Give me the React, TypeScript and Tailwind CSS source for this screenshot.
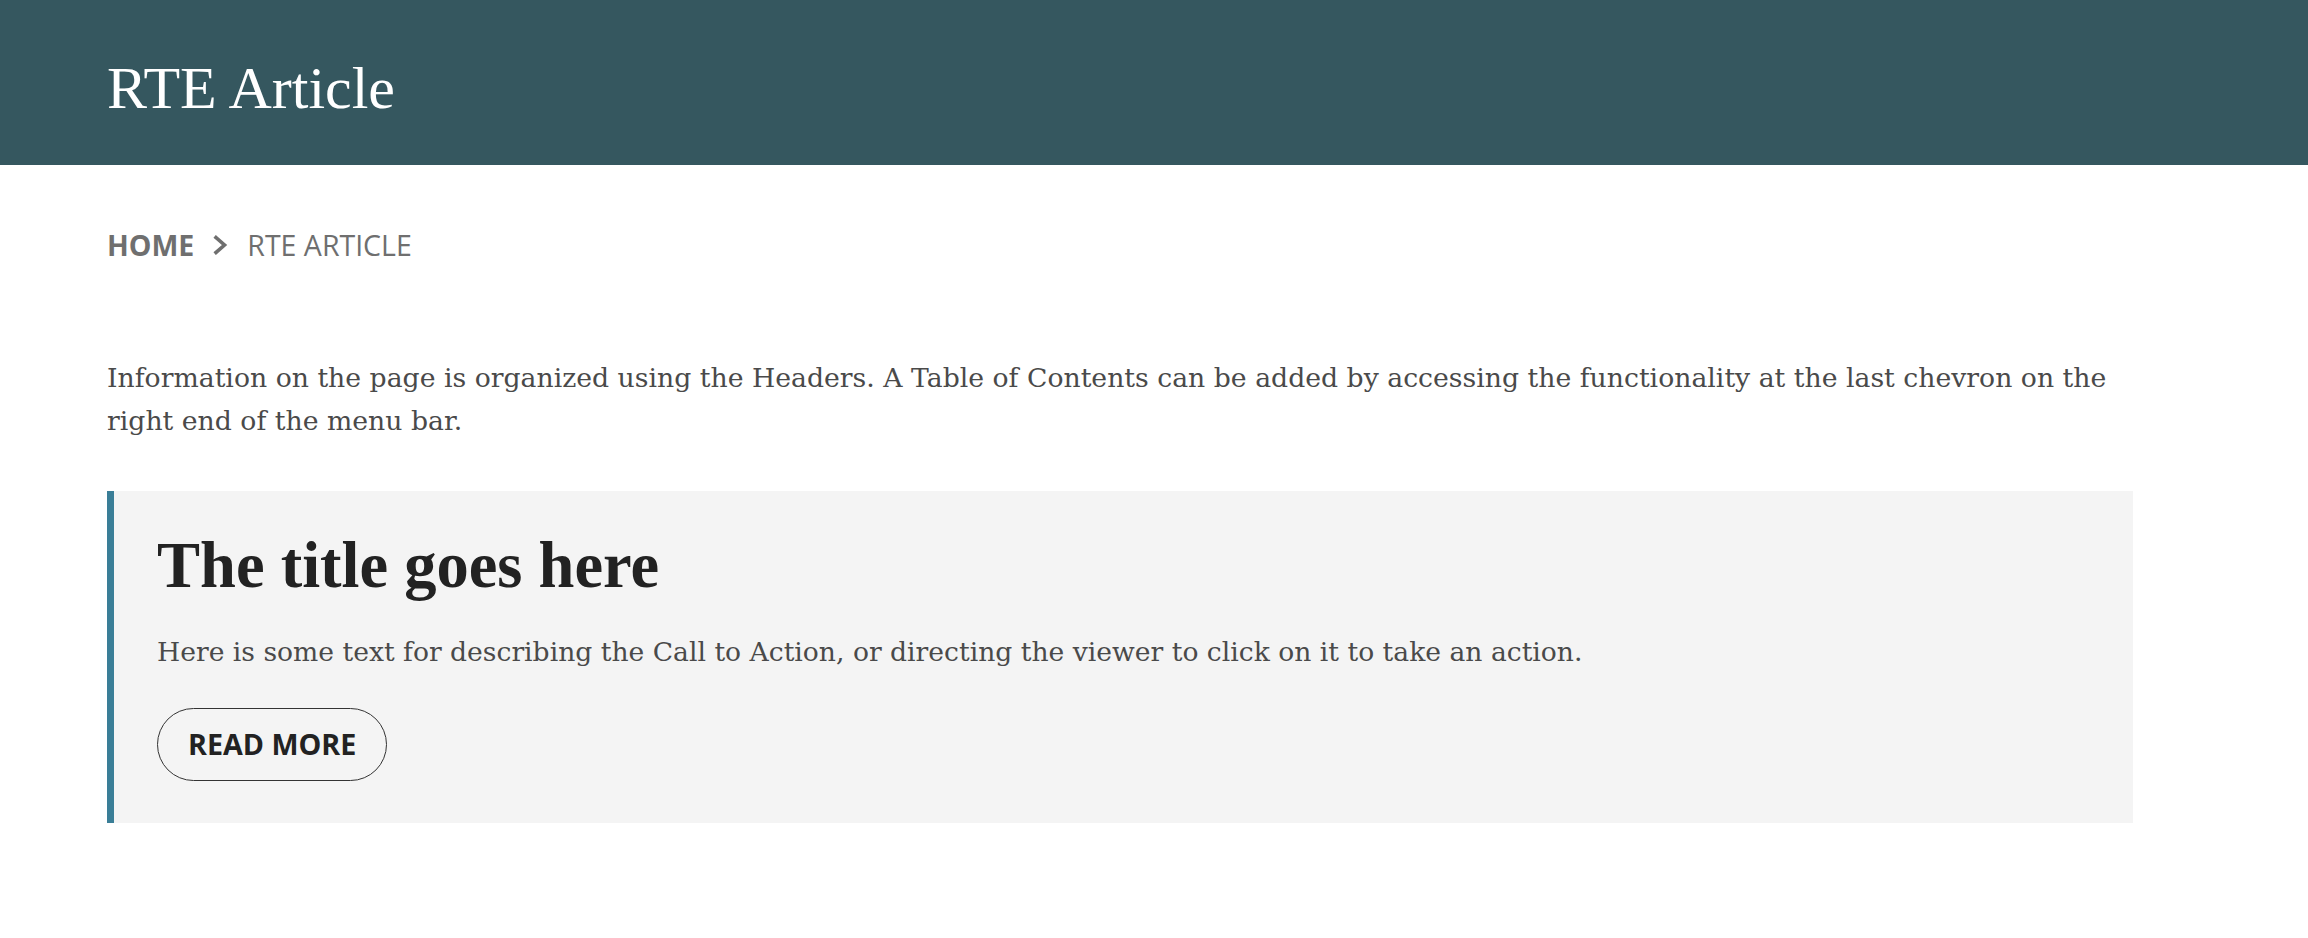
import React from 'react';

const serif = "font-['Liberation_Serif','Times_New_Roman',serif]";
const body = "font-['DejaVu_Serif','Liberation_Serif',serif]";
const sans = "font-['Open_Sans','Liberation_Sans',sans-serif]";

function Chevron() {
  return (
    <svg width="15" height="20" viewBox="0 0 15 20" className="shrink-0">
      <polyline points="3,2.5 11.5,10 3,17.5" fill="none" stroke="#6f6f6f" strokeWidth="3.6" strokeLinecap="square" strokeLinejoin="miter" />
    </svg>
  );
}

export default function App() {
  return (
    <div className="min-h-screen w-full bg-white">
      {/* Header */}
      <header className="h-[165px] bg-[#35575f] px-[107px] pt-[10px] flex items-center">
        <h1 className={`${serif} text-[60px] leading-none text-white`}>RTE Article</h1>
      </header>

      <main className="px-[107px]">
        {/* Breadcrumb */}
        <nav className={`${sans} mt-[61px] flex items-center gap-[19px] text-[28.5px] leading-[38px] text-[#6f6f6f]`}>
          <span className="font-bold">HOME</span>
          <Chevron />
          <span>RTE ARTICLE</span>
        </nav>

        {/* Intro */}
        <p className={`${body} mt-[93px] w-[2026px] text-[26.7px] leading-[42.5px] text-[#4a4a4a]`}>
          Information on the page is organized using the Headers. A Table of Contents can be added by accessing the functionality at the last chevron on the right end of the menu bar.
        </p>

        {/* Call to action */}
        <section className="mt-[49px] w-[2026px] bg-[#f4f4f4] border-l-[7px] border-[#3a7e97] pl-[43px] pr-[43px] pt-[36px] pb-[42px]">
          <h2 className={`${serif} text-[64.5px] leading-[1.2] font-bold text-[#222222]`}>The title goes here</h2>
          <p className={`${body} mt-[27px] text-[26.6px] leading-[42.5px] text-[#4a4a4a]`}>
            Here is some text for describing the Call to Action, or directing the viewer to click on it to take an action.
          </p>
          <button className={`${sans} mt-[34px] h-[73px] px-[30px] rounded-full border border-[#333333] text-[28.7px] font-bold text-[#222222] leading-none`}>
            READ MORE
          </button>
        </section>
      </main>
    </div>
  );
}
